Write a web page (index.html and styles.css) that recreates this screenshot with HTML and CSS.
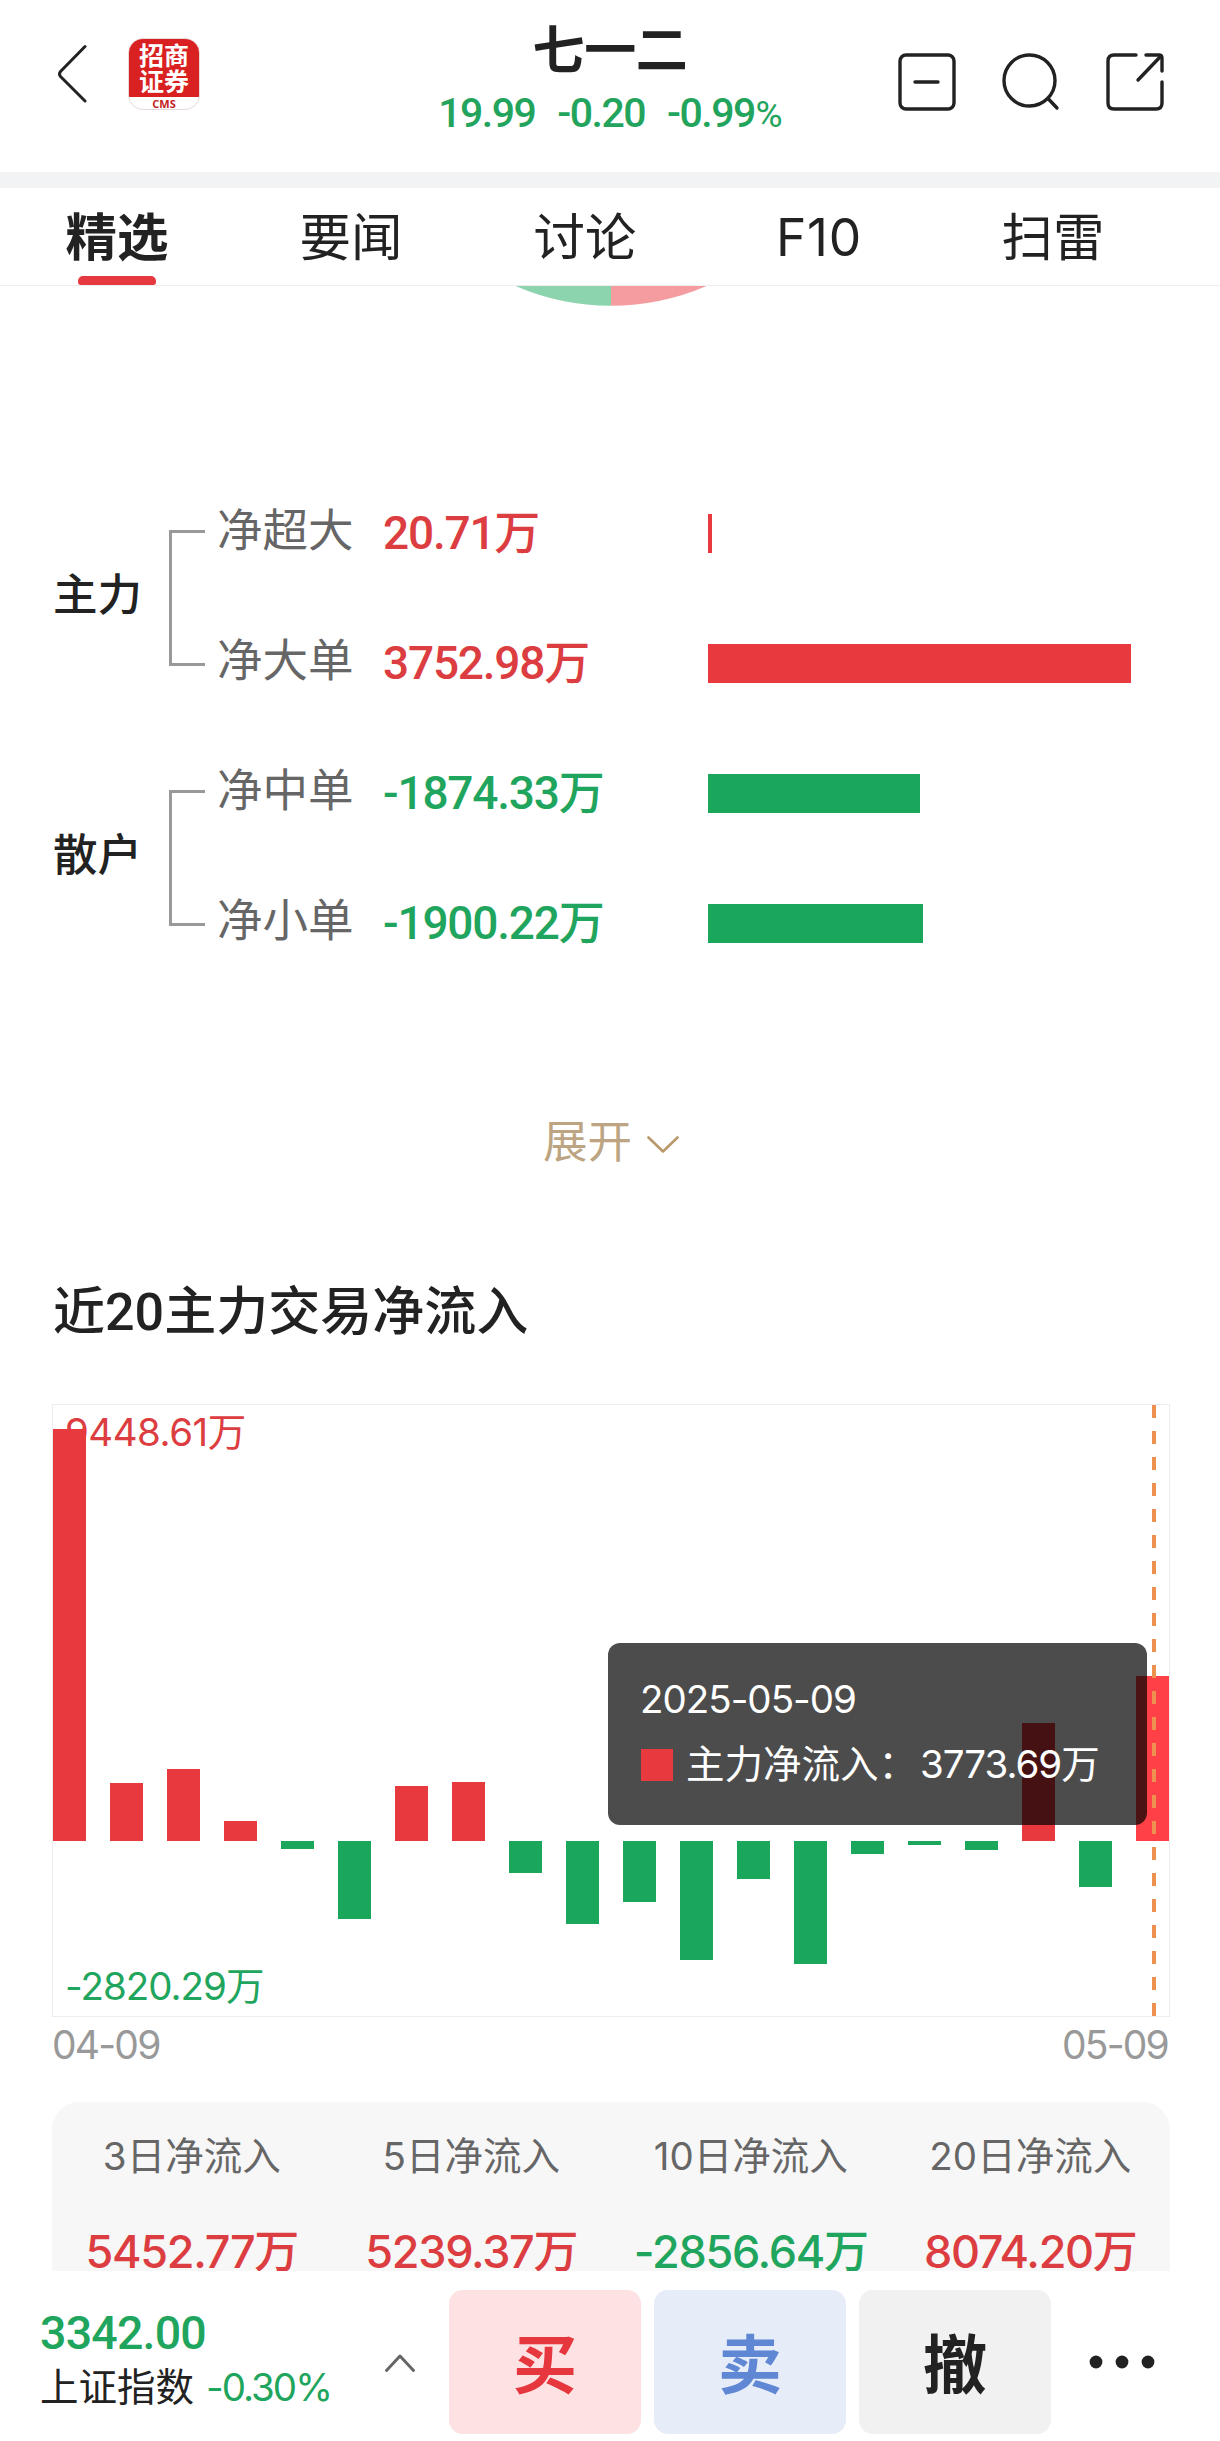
FILE: index.html
```html
<!DOCTYPE html>
<html lang="zh-CN">
<head>
<meta charset="utf-8">
<title>七一二</title>
<link rel="stylesheet" href="styles.css">
</head>
<body>
<header class="header">
  <div class="header-left">
    <svg class="back" width="32" height="60" viewBox="0 0 32 60"><path d="M28 3 L3.5 28 Q1.5 30.500 3.500 33 L28 57.500" transform="translate(0 -.5)"/></svg>
    <div class="logo">
      <div class="logo-name">招商<br>证券</div>
      <div class="logo-sub">CMS</div>
    </div>
  </div>
  <div class="quote">
    <h1 class="stock">七一二</h1>
    <div class="prices din"><span>19.99</span><span>-0.20</span><span>-0.99<i class="pct">%</i></span></div>
  </div>
  <div class="header-icons">
    <svg width="60" height="60" viewBox="0 0 60 60"><rect x="3" y="3" width="54" height="54" rx="6"/><path d="M18 30H41"/></svg>
    <svg width="60" height="60" viewBox="0 0 60 60"><circle cx="28.500" cy="28.500" r="25.500"/><path d="M47.500 47 L56 56"/></svg>
    <svg width="60" height="60" viewBox="0 0 60 60"><path d="M31 3H9Q3 3 3 9V51Q3 57 9 57H51Q57 57 57 51V30"/><path d="M41 3H54Q57 3 57 6V19"/><path d="M56 4 L33 28"/></svg>
  </div>
</header>

<nav class="tabs">
  <div class="tab tab-on">精选</div>
  <div class="tab">要闻</div>
  <div class="tab">讨论</div>
  <div class="tab">F10</div>
  <div class="tab">扫雷</div>
</nav>

<main class="content">
  <svg class="pie" width="240" height="22" viewBox="491 286 240 22">
    <path fill="#8bd4ae" d="M611 286V305.700A241 241 0 0 1 515.500 286Z"/>
    <path fill="#f59ca1" d="M611 286V305.700A241 241 0 0 0 706.500 286Z"/>
  </svg>

  <section class="orders">
    <div class="group">
      <div class="group-name">主力</div>
      <div class="bracket"></div>
      <div class="rows">
        <div class="row"><span class="kind">净超大</span><span class="amount din up">20.71万</span><span class="bar bg-up" style="width:4px"></span></div>
        <div class="row"><span class="kind">净大单</span><span class="amount din up">3752.98万</span><span class="bar bg-up" style="width:423px"></span></div>
      </div>
    </div>
    <div class="group">
      <div class="group-name">散户</div>
      <div class="bracket"></div>
      <div class="rows">
        <div class="row"><span class="kind">净中单</span><span class="amount din down">-1874.33万</span><span class="bar bg-down" style="width:212px"></span></div>
        <div class="row"><span class="kind">净小单</span><span class="amount din down">-1900.22万</span><span class="bar bg-down" style="width:215px"></span></div>
      </div>
    </div>
  </section>

  <div class="expand">展开<svg width="32" height="18" viewBox="0 0 32 18"><path d="M1.500 1.500 L16 15.500 L30.500 1.500"/></svg></div>

  <h2 class="title">近<span class="din">20</span>主力交易净流入</h2>

  <div class="chart">
    <div class="max up">9448.61万</div>
    <div class="min down">-2820.29万</div>
    <div class="bars">
      <i class="pos" style="--v:412"></i>
      <i class="pos" style="--v:58"></i>
      <i class="pos" style="--v:72"></i>
      <i class="pos" style="--v:20"></i>
      <i class="neg" style="--v:8"></i>
      <i class="neg" style="--v:78"></i>
      <i class="pos" style="--v:55"></i>
      <i class="pos" style="--v:59"></i>
      <i class="neg" style="--v:31.500"></i>
      <i class="neg" style="--v:83"></i>
      <i class="neg" style="--v:60.500"></i>
      <i class="neg" style="--v:118.500"></i>
      <i class="neg" style="--v:38"></i>
      <i class="neg" style="--v:123"></i>
      <i class="neg" style="--v:12.500"></i>
      <i class="neg" style="--v:3.500"></i>
      <i class="neg" style="--v:8.500"></i>
      <i class="pos" style="--v:118.500"></i>
      <i class="neg" style="--v:45.500"></i>
      <i class="pos active" style="--v:165"></i>
    </div>
    <div class="cursor"></div>
    <div class="tooltip">
      <div class="tip-date">2025-05-09</div>
      <div class="tip-row"><span class="swatch"></span><span class="tip-name">主力净流入：</span><span>3773.69万</span></div>
    </div>
  </div>
  <div class="dates"><span>04-09</span><span>05-09</span></div>

  <section class="summary">
    <div class="cell"><div class="cell-name">3日净流入</div><div class="cell-value up">5452.77万</div></div>
    <div class="cell"><div class="cell-name">5日净流入</div><div class="cell-value up">5239.37万</div></div>
    <div class="cell"><div class="cell-name">10日净流入</div><div class="cell-value down">-2856.64万</div></div>
    <div class="cell"><div class="cell-name">20日净流入</div><div class="cell-value up">8074.20万</div></div>
  </section>
</main>

<footer class="footer">
  <div class="index">
    <div class="index-value din down">3342.00</div>
    <div class="index-row"><span>上证指数</span><span class="index-change down">-0.30%</span></div>
  </div>
  <svg class="caret" width="32" height="20" viewBox="0 0 32 20"><path d="M2.500 17.500 L16 3 L29.500 17.500"/></svg>
  <div class="actions">
    <div class="btn buy">买</div>
    <div class="btn sell">卖</div>
    <div class="btn cancel">撤</div>
  </div>
  <svg class="more" width="66" height="14" viewBox="0 0 66 14"><circle cx="7" cy="7" r="6.400"/><circle cx="33" cy="7" r="6.400"/><circle cx="59" cy="7" r="6.400"/></svg>
</footer>
</body>
</html>
```
FILE: styles.css
```css
* {
  box-sizing: border-box;
}

body {
  margin: 0;
  width: 1220px;
  height: 2441px;
  display: flex;
  flex-direction: column;
  overflow: hidden;
  background: #fff;
  color: #222;
  font-family: Inter, "Noto Sans CJK SC", sans-serif;
  white-space: nowrap;
}

h1, h2 {
  margin: 0;
  font-weight: 500;
}

i {
  font-style: normal;
}

svg {
  display: block;
  fill: none;
  stroke-linecap: round;
  stroke-linejoin: round;
}

.din {
  font-family: Roboto, "Noto Sans CJK SC", sans-serif;
}

.up {
  color: #dc3d41;
}

.down {
  color: #1fa55d;
}

.bg-up {
  background: #e8393e;
}

.bg-down {
  background: #1aa75c;
}

/* header */
.header {
  flex: none;
  height: 188px;
  display: grid;
  grid-template-columns: 1fr 340px 1fr;
  border-bottom: 16px solid #f2f3f5;
}

.header-left {
  display: flex;
  align-items: flex-start;
  padding: 38px 0 0 57px;
}

.back {
  margin: 6px 39px 0 0;
  stroke: #222;
  stroke-width: 3;
}

.logo {
  width: 72px;
  height: 72px;
  border: 1px solid #e6dada;
  border-radius: 15px;
  overflow: hidden;
  background: #fff;
  text-align: center;
}

.logo-name {
  height: 59px;
  margin: -1px -1px 0;
  padding-top: 3px;
  background: #d92121;
  color: #fff;
  font: 700 25px/26px "Noto Sans CJK SC", sans-serif;
}

.logo-sub {
  color: #c22222;
  font: 700 11px/14px "Open Sans", sans-serif;
}

.quote {
  text-align: center;
}

.stock {
  margin-top: 21px;
  font-size: 52px;
  line-height: 60px;
  letter-spacing: -.3px;
  font-weight: 600;
}

.prices {
  display: flex;
  justify-content: center;
  gap: 22px;
  margin-top: 6px;
  color: #23a45d;
  font-size: 41px;
  line-height: 52px;
  font-weight: 500;
  letter-spacing: -1.500px;
}

.pct {
  display: inline-block;
  width: 27px;
  font-weight: 400;
  font-size: 37px;
}

.header-icons {
  display: flex;
  gap: 44px;
  padding: 52px 0 0 117px;
}

.header-icons svg {
  stroke: #222;
  stroke-width: 3.400;
}

/* tabs */
.tabs {
  flex: none;
  height: 98px;
  display: flex;
  border-bottom: 1px solid #eee;
}

.tab {
  width: 234px;
  display: flex;
  flex-direction: column;
  align-items: center;
  justify-content: space-between;
  font-size: 51.500px;
  line-height: 98px;
}

.tab:nth-child(4) {
  letter-spacing: .8px;
}

.tab-on {
  font-weight: 700;
}

.tab-on::after {
  content: "";
  width: 78px;
  height: 9px;
  margin-top: -10px;
  border-radius: 5px 5px 3px 3px;
  background: #e5393f;
}

/* order sizes */
.content {
  flex: none;
  height: 1985px;
  overflow: hidden;
}

.pie {
  margin-left: 491px;
}

.orders {
  margin-top: 159px;
  padding-left: 53px;
}

.group {
  display: flex;
  align-items: center;
  height: 260px;
  font-size: 45.500px;
  line-height: 60px;
}

.group-name {
  width: 116px;
  margin-top: -5px;
  font-size: 44.500px;
  font-weight: 500;
}

.bracket {
  width: 36px;
  height: 136px;
  margin: 2px 12px 0 0;
  border: 3px solid #999;
  border-right: 0;
}

.row {
  display: flex;
  align-items: center;
  height: 130px;
}

.kind {
  width: 166px;
  margin-top: -2px;
  color: #666;
}

.amount {
  width: 325px;
  margin-top: 2px;
  font-size: 46px;
  font-weight: 500;
  letter-spacing: -1.200px;
}

.bar {
  height: 39px;
  margin-top: 3px;
}

.expand {
  display: flex;
  align-items: center;
  gap: 15px;
  margin-top: 125px;
  padding-left: 543px;
  color: #bda583;
  font-size: 44.500px;
  line-height: 60px;
}

.expand svg {
  margin-top: 6px;
  stroke: #b9996c;
  stroke-width: 2.600;
}

.title {
  margin: 110px 0 0 53px;
  font-size: 52px;
  line-height: 60px;
}

/* inflow chart */
.chart {
  position: relative;
  width: 1118px;
  height: 613px;
  margin: 61px 0 0 52px;
  border: 1px solid #ededed;
  font-size: 38.500px;
  line-height: 50px;
  letter-spacing: -1px;
}

.max,
.min {
  position: absolute;
  left: 12px;
}

.max {
  top: 2px;
  letter-spacing: -.5px;
}

.min {
  bottom: 5px;
}

.bars {
  position: relative;
  display: flex;
  align-items: flex-start;
  gap: 24px;
}

.bars i {
  width: 33px;
  height: calc(var(--v) * 1px);
}

.pos {
  margin-top: calc((436 - var(--v)) * 1px);
  background: #e8393e;
}

.neg {
  margin-top: 436px;
  background: #1aa75c;
}

.bars .active {
  background: #ff4046;
}

.cursor {
  position: absolute;
  top: 0;
  bottom: 0;
  left: 1099px;
  width: 4px;
  background: repeating-linear-gradient(#ee9150 0 13px, transparent 13px 26px);
}

.tooltip {
  position: absolute;
  left: 555px;
  top: 238px;
  width: 539px;
  height: 182px;
  padding: 31px 33px;
  border-radius: 12px;
  background: rgba(0, 0, 0, .7);
  color: #fff;
}

.tip-date {
  margin-left: -1px;
}

.tip-row {
  display: flex;
  align-items: center;
  margin-top: 15px;
}

.swatch {
  width: 32px;
  height: 32px;
  margin: 2px 13px 0 0;
  background: #e8393e;
}

.tip-name {
  width: 234px;
  letter-spacing: 0;
}

.dates {
  display: flex;
  justify-content: space-between;
  margin: 3px 52px 0 52px;
  color: #999;
  font-size: 39px;
  line-height: 50px;
  letter-spacing: -1.800px;
}

/* totals */
.summary {
  display: flex;
  width: 1118px;
  height: 200px;
  margin: 32px 0 0 52px;
  padding-top: 29px;
  border-radius: 27px;
  background: #f7f7f7;
}

.cell {
  flex: 1;
  text-align: center;
}

.cell-name {
  color: #666;
  font-size: 38.500px;
  line-height: 50px;
}

.cell-value {
  margin-top: 41px;
  font-size: 45px;
  line-height: 60px;
  font-weight: 500;
  letter-spacing: -1.300px;
}

/* trade bar */
.footer {
  flex: 1;
  display: flex;
  align-items: flex-start;
  background: #fff;
}

.index {
  width: 344px;
  margin-top: 34px;
  padding-left: 40px;
}

.index-value {
  font-size: 46.500px;
  line-height: 56px;
  font-weight: 500;
  letter-spacing: -.8px;
}

.index-row {
  display: flex;
  font-size: 38.500px;
  line-height: 52px;
}

.index-change {
  margin-left: 12px;
  letter-spacing: -2px;
}

.caret {
  margin: 82px 0 0 40px;
  stroke: #666;
  stroke-width: 3;
}

.actions {
  display: flex;
  gap: 13px;
  margin: 19px 0 0 33px;
}

.btn {
  width: 192px;
  height: 144px;
  border-radius: 14px;
  font-size: 64px;
  line-height: 150px;
  font-weight: 700;
  text-align: center;
}

.buy {
  background: #fde1e3;
  color: #e5373d;
}

.sell {
  background: #e6edf9;
  color: #5f87d3;
}

.cancel {
  background: #f1f1f1;
}

.more {
  margin: 84px 0 0 38px;
  fill: #222;
}
```
